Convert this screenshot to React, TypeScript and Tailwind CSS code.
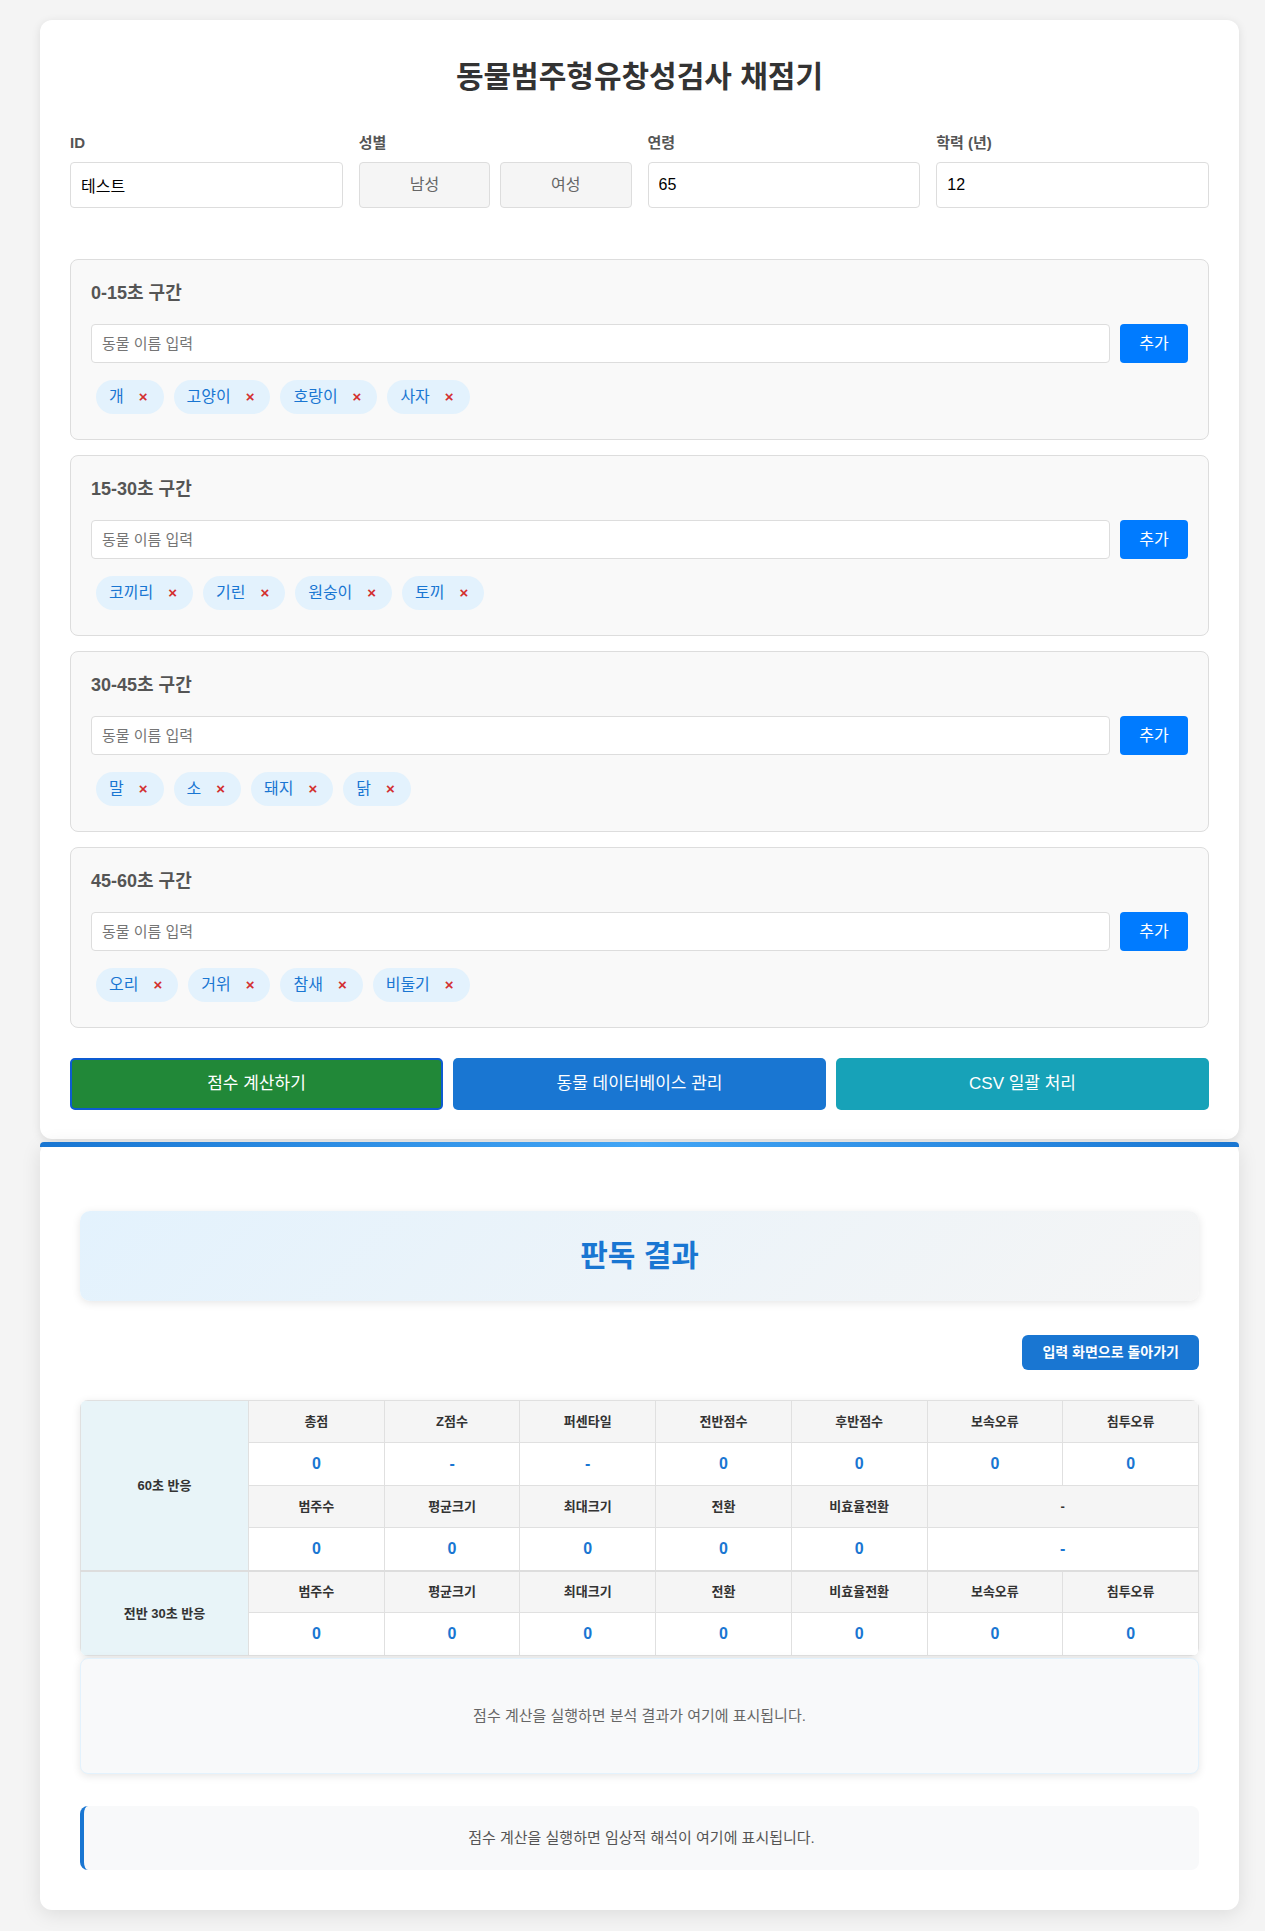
import React from "react";

const sections = [
  { title: "0-15초 구간", animals: ["개", "고양이", "호랑이", "사자"] },
  { title: "15-30초 구간", animals: ["코끼리", "기린", "원숭이", "토끼"] },
  { title: "30-45초 구간", animals: ["말", "소", "돼지", "닭"] },
  { title: "45-60초 구간", animals: ["오리", "거위", "참새", "비둘기"] },
];

const th =
  "h-[42px] border border-[#e0e0e0] bg-[#f5f5f5] text-center text-[13px] font-semibold text-[#333]";
const td =
  "h-[43px] border border-[#e0e0e0] bg-white text-center text-[16px] font-bold text-[#1976d2]";
const labelCell =
  "border border-[#e0e0e0] bg-[#e8f4f8] text-center text-[13px] font-bold text-[#333]";

const AnimalSection = ({ title, animals }: { title: string; animals: string[] }) => (
  <div className="rounded-lg border border-[#ddd] bg-[#f9f9f9] px-[20px] pt-[21px] pb-[20px]">
    <h3 className="mb-[19px] text-[18px] leading-[24px] font-bold text-[#555]">{title}</h3>
    <div className="flex gap-[10px]">
      <input
        className="h-[39px] flex-1 rounded-[4px] border border-[#ddd] bg-white px-[10px] text-[15px] outline-none placeholder:text-[#757575]"
        placeholder="동물 이름 입력"
      />
      <button className="h-[39px] w-[68px] rounded-[4px] bg-[#007bff] text-[16px] text-white">추가</button>
    </div>
    <div className="mt-[12px] flex flex-wrap">
      {animals.map((a) => (
        <span
          key={a}
          className="m-[5px] flex h-[34px] items-center rounded-full bg-[#e3f2fd] pr-[13px] pl-[13px] text-[16px] text-[#1976d2]"
        >
          {a}
          <button className="ml-[12px] px-[3px] text-[15px] font-bold text-[#d32f2f]">×</button>
        </span>
      ))}
    </div>
  </div>
);

export default function App() {
  return (
    <div className="min-h-[1931px] bg-[#f4f4f4] pt-[20px] pb-[21px] font-['Liberation_Sans','Noto_Sans_CJK_KR',sans-serif] text-[#333]">
      {/* 입력 화면 */}
      <div className="ml-[40px] w-[1199px] rounded-xl bg-white px-[30px] pt-[34px] pb-[29px] shadow-[0_2px_10px_rgba(0,0,0,0.1)]">
        <h1 className="text-center text-[30px] leading-[46px] font-bold text-[#333]">동물범주형유창성검사 채점기</h1>

        <div className="mt-[32px] grid grid-cols-4 gap-[16px]">
          <div>
            <label className="mb-[8px] block text-[15px] leading-[22px] font-bold text-[#555]">ID</label>
            <input
              className="h-[46px] w-full rounded-[4px] border border-[#ddd] px-[10px] text-[16px] text-black outline-none"
              defaultValue="테스트"
            />
          </div>
          <div>
            <label className="mb-[8px] block text-[15px] leading-[22px] font-bold text-[#555]">성별</label>
            <div className="flex gap-[10px]">
              <button className="h-[46px] flex-1 rounded-[4px] border border-[#ddd] bg-[#f5f5f5] text-[16px] text-[#666]">
                남성
              </button>
              <button className="h-[46px] flex-1 rounded-[4px] border border-[#ddd] bg-[#f5f5f5] text-[16px] text-[#666]">
                여성
              </button>
            </div>
          </div>
          <div>
            <label className="mb-[8px] block text-[15px] leading-[22px] font-bold text-[#555]">연령</label>
            <input
              className="h-[46px] w-full rounded-[4px] border border-[#ddd] px-[10px] text-[16px] text-black outline-none"
              defaultValue="65"
            />
          </div>
          <div>
            <label className="mb-[8px] block text-[15px] leading-[22px] font-bold text-[#555]">학력 (년)</label>
            <input
              className="h-[46px] w-full rounded-[4px] border border-[#ddd] px-[10px] text-[16px] text-black outline-none"
              defaultValue="12"
            />
          </div>
        </div>

        <div className="mt-[51px] flex flex-col gap-[15px]">
          {sections.map((s) => (
            <AnimalSection key={s.title} title={s.title} animals={s.animals} />
          ))}
        </div>

        <div className="mt-[30px] grid grid-cols-3 gap-[10px]">
          <button className="h-[52px] rounded-[5px] border-2 border-[#0d5bd1] bg-[#218838] text-[17px] text-white">
            점수 계산하기
          </button>
          <button className="h-[52px] rounded-[5px] border-2 border-transparent bg-[#1976d2] text-[17px] text-white">
            동물 데이터베이스 관리
          </button>
          <button className="h-[52px] rounded-[5px] border-2 border-transparent bg-[#17a2b8] text-[17px] text-white">
            CSV 일괄 처리
          </button>
        </div>
      </div>

      {/* 판독 결과 */}
      <div className="relative mt-[3px] ml-[40px] w-[1199px] rounded-xl bg-white px-[40px] pt-[69px] pb-[40px] shadow-[0_4px_20px_rgba(0,0,0,0.1)]">
        <div className="absolute top-0 right-0 left-0 h-[5px] rounded-t-[4px] bg-[linear-gradient(90deg,#1976d2,#42a5f5,#1976d2)]" />

        <div className="rounded-[10px] bg-[linear-gradient(135deg,#e3f2fd,#f5f5f5)] py-[27px] text-center shadow-[0_2px_8px_rgba(0,0,0,0.1)]">
          <h2 className="text-[30px] leading-[36px] font-bold text-[#1976d2]">판독 결과</h2>
        </div>

        <div className="mt-[34px] flex justify-end">
          <button className="h-[35px] rounded-[6px] bg-[#1976d2] px-[20px] text-[14px] font-bold text-white">
            입력 화면으로 돌아가기
          </button>
        </div>

        <div className="mt-[30px] overflow-hidden rounded-lg shadow-[0_2px_8px_rgba(0,0,0,0.1)]">
          <table className="w-full table-fixed border-collapse">
            <colgroup>
              <col className="w-[168px]" />
              <col />
              <col />
              <col />
              <col />
              <col />
              <col />
              <col />
            </colgroup>
            <tbody>
              <tr>
                <td rowSpan={4} className={labelCell}>
                  60초 반응
                </td>
                {["총점", "Z점수", "퍼센타일", "전반점수", "후반점수", "보속오류", "침투오류"].map((h) => (
                  <td key={h} className={th}>
                    {h}
                  </td>
                ))}
              </tr>
              <tr>
                {["0", "-", "-", "0", "0", "0", "0"].map((v, i) => (
                  <td key={i} className={td}>
                    {v}
                  </td>
                ))}
              </tr>
              <tr>
                {["범주수", "평균크기", "최대크기", "전환", "비효율전환"].map((h) => (
                  <td key={h} className={th}>
                    {h}
                  </td>
                ))}
                <td colSpan={2} className={th + " font-normal"}>
                  -
                </td>
              </tr>
              <tr>
                {["0", "0", "0", "0", "0"].map((v, i) => (
                  <td key={i} className={td}>
                    {v}
                  </td>
                ))}
                <td colSpan={2} className={td}>
                  -
                </td>
              </tr>
              <tr>
                <td rowSpan={2} className={labelCell + " border-t-2 border-t-[#ddd]"}>
                  전반 30초 반응
                </td>
                {["범주수", "평균크기", "최대크기", "전환", "비효율전환", "보속오류", "침투오류"].map((h) => (
                  <td key={h} className={th + " border-t-2 border-t-[#ddd]"}>
                    {h}
                  </td>
                ))}
              </tr>
              <tr>
                {["0", "0", "0", "0", "0", "0", "0"].map((v, i) => (
                  <td key={i} className={td}>
                    {v}
                  </td>
                ))}
              </tr>
            </tbody>
          </table>
        </div>

        <div className="mt-[2px] rounded-lg border border-[#e3f2fd] bg-[#f8f9fa] py-[46px] text-center text-[15px] leading-[22px] text-[#666] shadow-[0_2px_8px_rgba(0,0,0,0.1)]">
          점수 계산을 실행하면 분석 결과가 여기에 표시됩니다.
        </div>

        <div className="mt-[32px] rounded-lg border-l-4 border-[#1976d2] bg-[#f8f9fa] py-[21px] text-center text-[15px] leading-[22px] text-[#555]">
          점수 계산을 실행하면 임상적 해석이 여기에 표시됩니다.
        </div>
      </div>
    </div>
  );
}
